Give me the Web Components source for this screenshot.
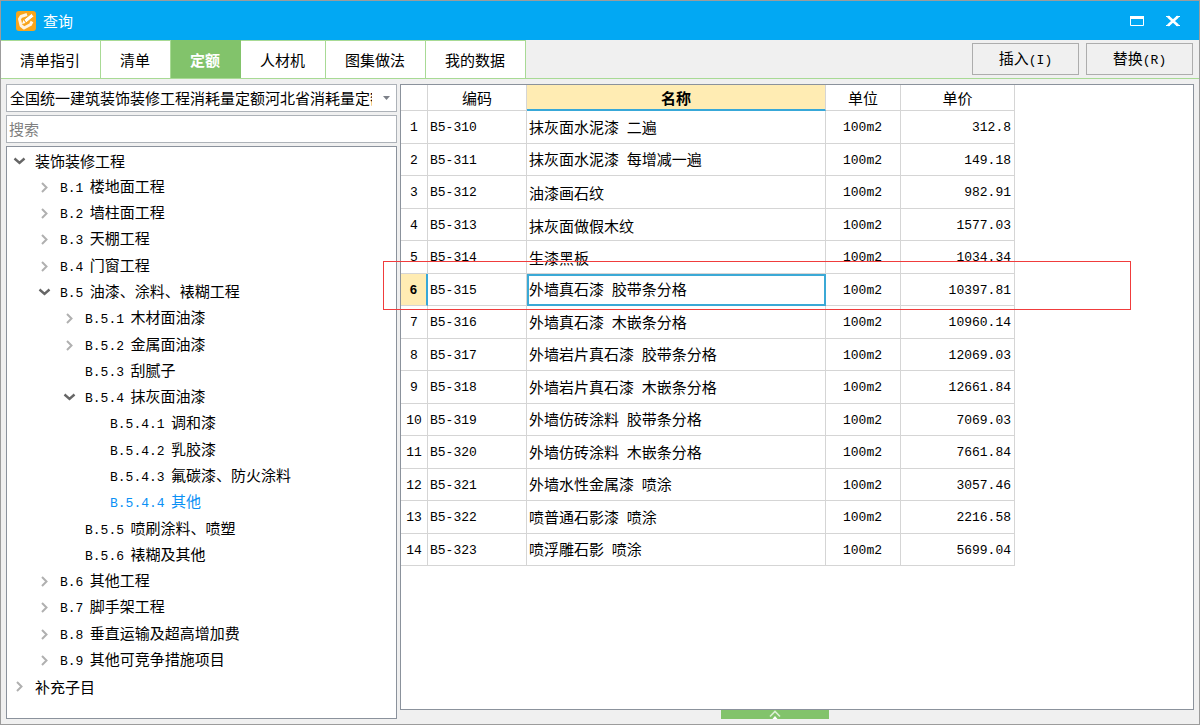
<!DOCTYPE html>
<html lang="zh-CN">
<head>
<meta charset="utf-8">
<title>查询</title>
<style>
  html, body { margin: 0; height: 100%; }
  body {
    --blue: #02a8f3;
    --green: #82c36b;
    --green-line: #a8da95;
    --panel: #f0f0f0;
    --grid: #d5d5d5;
    --frame: #8b929c;
    --mono: "Liberation Mono", monospace;
    font: 15px/20px "Noto Sans CJK SC", sans-serif;
    color: #000;
  }
</style>
</head>
<body>
<query-window>
  <title-bar slot="title">查询</title-bar>
  <tab-strip slot="tabs">
    <tab-item>清单指引</tab-item>
    <tab-item>清单</tab-item>
    <tab-item active>定额</tab-item>
    <tab-item>人材机</tab-item>
    <tab-item>图集做法</tab-item>
    <tab-item>我的数据</tab-item>
    <push-button slot="actions">插入<span>(I)</span></push-button>
    <push-button slot="actions">替换<span>(R)</span></push-button>
  </tab-strip>
  <quota-picker slot="side"></quota-picker>
  <search-field slot="side"></search-field>
  <chapter-tree slot="side"></chapter-tree>
  <quota-table slot="main"></quota-table>
  <drawer-handle slot="main"></drawer-handle>
</query-window>

<script>
const define = (name, html, setup) => {
  const template = document.createElement('template');
  template.innerHTML = html;
  customElements.define(name, class extends HTMLElement {
    constructor() {
      super();
      this.attachShadow({ mode: 'open' }).append(template.content.cloneNode(true));
    }
    connectedCallback() { if (setup) setup(this.shadowRoot, this); }
  });
};

define('query-window', `
  <style>
    :host { display: grid; grid-template-rows: auto auto 1fr; box-sizing: border-box; min-height: 100vh;
      border: 1px solid #9c9c9c; background: var(--panel); }
    .body { display: grid; grid-template-columns: 391px minmax(0, 1fr); gap: 3px; padding: 5px; }
    .side { display: grid; grid-template-rows: 28px 28px 1fr; gap: 3px; }
    .main { display: grid; grid-template-rows: 1fr auto; }
  </style>
  <slot name="title"></slot>
  <slot name="tabs"></slot>
  <div class="body">
    <div class="side"><slot name="side"></slot></div>
    <div class="main"><slot name="main"></slot></div>
  </div>`);

define('title-bar', `
  <style>
    :host { display: flex; align-items: center; gap: 7px; height: 39px; padding: 0 19px 0 15px;
      background: var(--blue); color: #fff; }
    h1 { flex: 1; margin: 0; font: inherit; }
    button { display: grid; padding: 0; border: 0; background: none; color: inherit; }
    .buttons { display: flex; gap: 22px; }
    svg { display: block; }
  </style>
  <svg width="20" height="20" viewBox="0 0 20 20" aria-hidden="true">
    <rect width="20" height="20" rx="3" fill="#f8a51b"/>
    <path d="M11 3.500 5 5.500 3.500 8 5 14.500 8 17 14.500 13.500 16 10.500" fill="none" stroke="#fff3e0" stroke-width="3" stroke-linejoin="round"/>
    <path d="M8 8.500 10 12 18 5.500 15.500 2.500Z" fill="#fff" stroke="#f8a51b" stroke-width="1"/>
    <path d="M6 13 9.500 12 7.500 9Z" fill="#fff"/>
  </svg>
  <h1><slot></slot></h1>
  <div class="buttons">
    <button aria-label="最大化"><svg width="14" height="14" viewBox="0 0 14 14"><path d="M.5 2.500h13v9H.5Z" fill="none" stroke="#fff"/><path d="M0 2h14v3H0Z" fill="#fff"/></svg></button>
    <button aria-label="关闭"><svg width="14" height="14" viewBox="0 0 14 14"><path d="M2 2.500 12 11.500M12 2.500 2 11.500" stroke="#fff" stroke-width="2.600"/><path d="M0 2.500h4M10 2.500h4M0 11.500h4M10 11.500h4" stroke="#fff"/></svg></button>
  </div>`);

define('tab-strip', `
  <style>
    :host { display: flex; height: 38px; border-bottom: 1px solid var(--green-line); }
    nav { display: flex; flex: 1; }
    .actions { display: flex; align-items: center; gap: 7px; padding-right: 6px; }
  </style>
  <nav><slot></slot></nav>
  <div class="actions"><slot name="actions"></slot></div>`);

define('tab-item', `
  <style>
    :host { display: grid; }
    button { padding: 1px 20px 0 19px; border: 1px solid var(--green-line); border-width: 1px 1px 0 0;
      background: #fff; color: inherit; font: inherit; }
    :host([active]) button { background: var(--green); border-color: var(--green); color: #fff; font-weight: bold; }
  </style>
  <button><slot></slot></button>`);

define('push-button', `
  <style>
    :host { display: grid; }
    button { width: 107px; height: 32px; padding: 1px 0 0; border: 1px solid #adadad;
      background: var(--panel); color: inherit; font: inherit; }
    ::slotted(span) { font: 13px/20px var(--mono); }
  </style>
  <button><slot></slot></button>`);

define('quota-picker', `
  <style>
    :host { display: grid; position: relative; }
    select { width: 100%; padding: 0 24px 0 3px; border: 1px solid #adb2b8; border-radius: 0; appearance: none;
      background: #fff; color: inherit; font: inherit; overflow: hidden; }
    svg { position: absolute; right: 7px; top: 12px; pointer-events: none; }
  </style>
  <select aria-label="定额库"><option>全国统一建筑装饰装修工程消耗量定额河北省消耗量定额</option></select>
  <svg width="7" height="4" viewBox="0 0 7 4" aria-hidden="true"><path d="M0 0h7L3.500 4Z" fill="#7c8088"/></svg>`);

define('search-field', `
  <style>
    :host { display: grid; }
    input { min-width: 0; padding: 0 2px; border: 1px solid #adb2b8; background: #fff; font: inherit; }
    input::placeholder { color: #808080; opacity: 1; }
  </style>
  <input type="text" placeholder="搜索" aria-label="搜索">`);

const chapters = [
  [1, 'open', '', '装饰装修工程'],
  [2, 'shut', 'B.1', '楼地面工程'],
  [2, 'shut', 'B.2', '墙柱面工程'],
  [2, 'shut', 'B.3', '天棚工程'],
  [2, 'shut', 'B.4', '门窗工程'],
  [2, 'open', 'B.5', '油漆、涂料、裱糊工程'],
  [3, 'shut', 'B.5.1', '木材面油漆'],
  [3, 'shut', 'B.5.2', '金属面油漆'],
  [3, 'leaf', 'B.5.3', '刮腻子'],
  [3, 'open', 'B.5.4', '抹灰面油漆'],
  [4, 'leaf', 'B.5.4.1', '调和漆'],
  [4, 'leaf', 'B.5.4.2', '乳胶漆'],
  [4, 'leaf', 'B.5.4.3', '氟碳漆、防火涂料'],
  [4, 'leaf', 'B.5.4.4', '其他', true],
  [3, 'leaf', 'B.5.5', '喷刷涂料、喷塑'],
  [3, 'leaf', 'B.5.6', '裱糊及其他'],
  [2, 'shut', 'B.6', '其他工程'],
  [2, 'shut', 'B.7', '脚手架工程'],
  [2, 'shut', 'B.8', '垂直运输及超高增加费'],
  [2, 'shut', 'B.9', '其他可竞争措施项目'],
  [1, 'shut', '', '补充子目'],
];
const arrows = {
  open: '<path d="M1.500 3.500 6.500 8 11.500 3.500" fill="none" stroke="#666" stroke-width="2.400"/>',
  shut: '<path d="M4 2 8.500 6.500 4 11" fill="none" stroke="#b0b0b0" stroke-width="2"/>',
  leaf: '',
};

define('chapter-tree', `
  <style>
    :host { display: grid; border: 1px solid var(--frame); background: #fff; }
    ul { display: grid; grid-auto-rows: 1fr; margin: 0; padding: 1px 0 18px; list-style: none; }
    li { display: flex; align-items: center; gap: 9px; padding-left: calc(var(--level) * 25px - 19px); white-space: pre; }
    .code { padding-right: 3px; font: 13px/20px var(--mono); }
    .selected { color: #0a90f5; }
  </style>
  <ul role="tree"></ul>`, root => {
  root.querySelector('ul').innerHTML = chapters.map(([level, state, code, name, selected]) =>
    `<li role="treeitem" aria-level="${level}" style="--level:${level}"${selected ? ' class="selected" aria-selected="true"' : ''}>` +
    `<svg width="13" height="13" viewBox="0 0 13 13" aria-hidden="true">${arrows[state]}</svg>` +
    `<span>${code ? `<span class="code">${code}</span> ` : ''}${name}</span></li>`).join('');
});

const quotas = [
  ['B5-310', '抹灰面水泥漆 二遍', '312.8'],
  ['B5-311', '抹灰面水泥漆 每增减一遍', '149.18'],
  ['B5-312', '油漆画石纹', '982.91'],
  ['B5-313', '抹灰面做假木纹', '1577.03'],
  ['B5-314', '生漆黑板', '1034.34'],
  ['B5-315', '外墙真石漆 胶带条分格', '10397.81'],
  ['B5-316', '外墙真石漆 木嵌条分格', '10960.14'],
  ['B5-317', '外墙岩片真石漆 胶带条分格', '12069.03'],
  ['B5-318', '外墙岩片真石漆 木嵌条分格', '12661.84'],
  ['B5-319', '外墙仿砖涂料 胶带条分格', '7069.03'],
  ['B5-320', '外墙仿砖涂料 木嵌条分格', '7661.84'],
  ['B5-321', '外墙水性金属漆 喷涂', '3057.46'],
  ['B5-322', '喷普通石影漆 喷涂', '2216.58'],
  ['B5-323', '喷浮雕石影 喷涂', '5699.04'],
];

define('quota-table', `
  <style>
    :host { display: block; position: relative; border: 1px solid var(--frame); background: #fff; }
    table { width: 614px; table-layout: fixed; border-collapse: separate; border-spacing: 0; }
    .no { width: 27px; } .code { width: 99px; } .name { width: 299px; } .unit { width: 75px; } .price { width: 114px; }
    th, td { box-sizing: border-box; padding: 2px 2px 0; border: 1px solid var(--grid); border-width: 0 1px 1px 0; white-space: nowrap; font-weight: normal; }
    thead th { height: 26px; padding-top: 1px; }
    thead th.current { border-bottom: 2px solid #38a8d8; background: #ffecb3; font-weight: bold; }
    tbody tr :is(th, td) { height: 33px; }
    tbody tr:nth-child(even) :is(th, td) { height: 32px; }
    tbody :is(th, td) { font: 13px/20px var(--mono); }
    tbody th { padding: 2px 0 0; text-align: center; }
    tbody td:nth-child(3) { font: inherit; }
    tbody td:nth-child(3) span { font: 13px/20px var(--mono); }
    tbody td:nth-child(4) { padding-right: 3px; text-align: center; }
    tbody td:nth-child(5) { padding-right: 3px; text-align: right; }
    tbody tr.current th { border-right: 2px solid #38a8d8; background: #ffecb3; font-weight: bold; }
    tr.current td:nth-child(3) { outline: 2px solid #3ba9d6; outline-offset: -2px; }
    .mark { position: absolute; left: -18px; top: 176px; width: 746px; height: 47px; border: 1px solid #f03c3c; pointer-events: none; }
  </style>
  <table>
    <colgroup><col class="no"><col class="code"><col class="name"><col class="unit"><col class="price"></colgroup>
    <thead><tr><th></th><th>编码</th><th class="current">名称</th><th>单位</th><th>单价</th></tr></thead>
    <tbody></tbody>
  </table>
  <div class="mark"></div>`, root => {
  root.querySelector('tbody').innerHTML = quotas.map(([code, name, price], i) =>
    `<tr${i === 5 ? ' class="current"' : ''}><th scope="row">${i + 1}</th><td>${code}</td>` +
    `<td>${name.replace(' ', '<span> </span>')}</td><td>100m2</td><td>${price}</td></tr>`).join('');
});

define('drawer-handle', `
  <style>
    :host { display: grid; justify-content: center; height: 9px; padding-right: 44px; }
    button { display: grid; justify-content: center; width: 108px; height: 9px; padding: 0; border: 0; background: var(--green); }
  </style>
  <button aria-label="展开"><svg width="12" height="9" viewBox="0 0 12 9"><path d="M1 6.500 6 1.500 11 6.500" fill="none" stroke="#dcefd4" stroke-width="1.600"/><path d="M3.500 9 6 6 8.500 9Z" fill="#fff"/></svg></button>`);
</script>
</body>
</html>
